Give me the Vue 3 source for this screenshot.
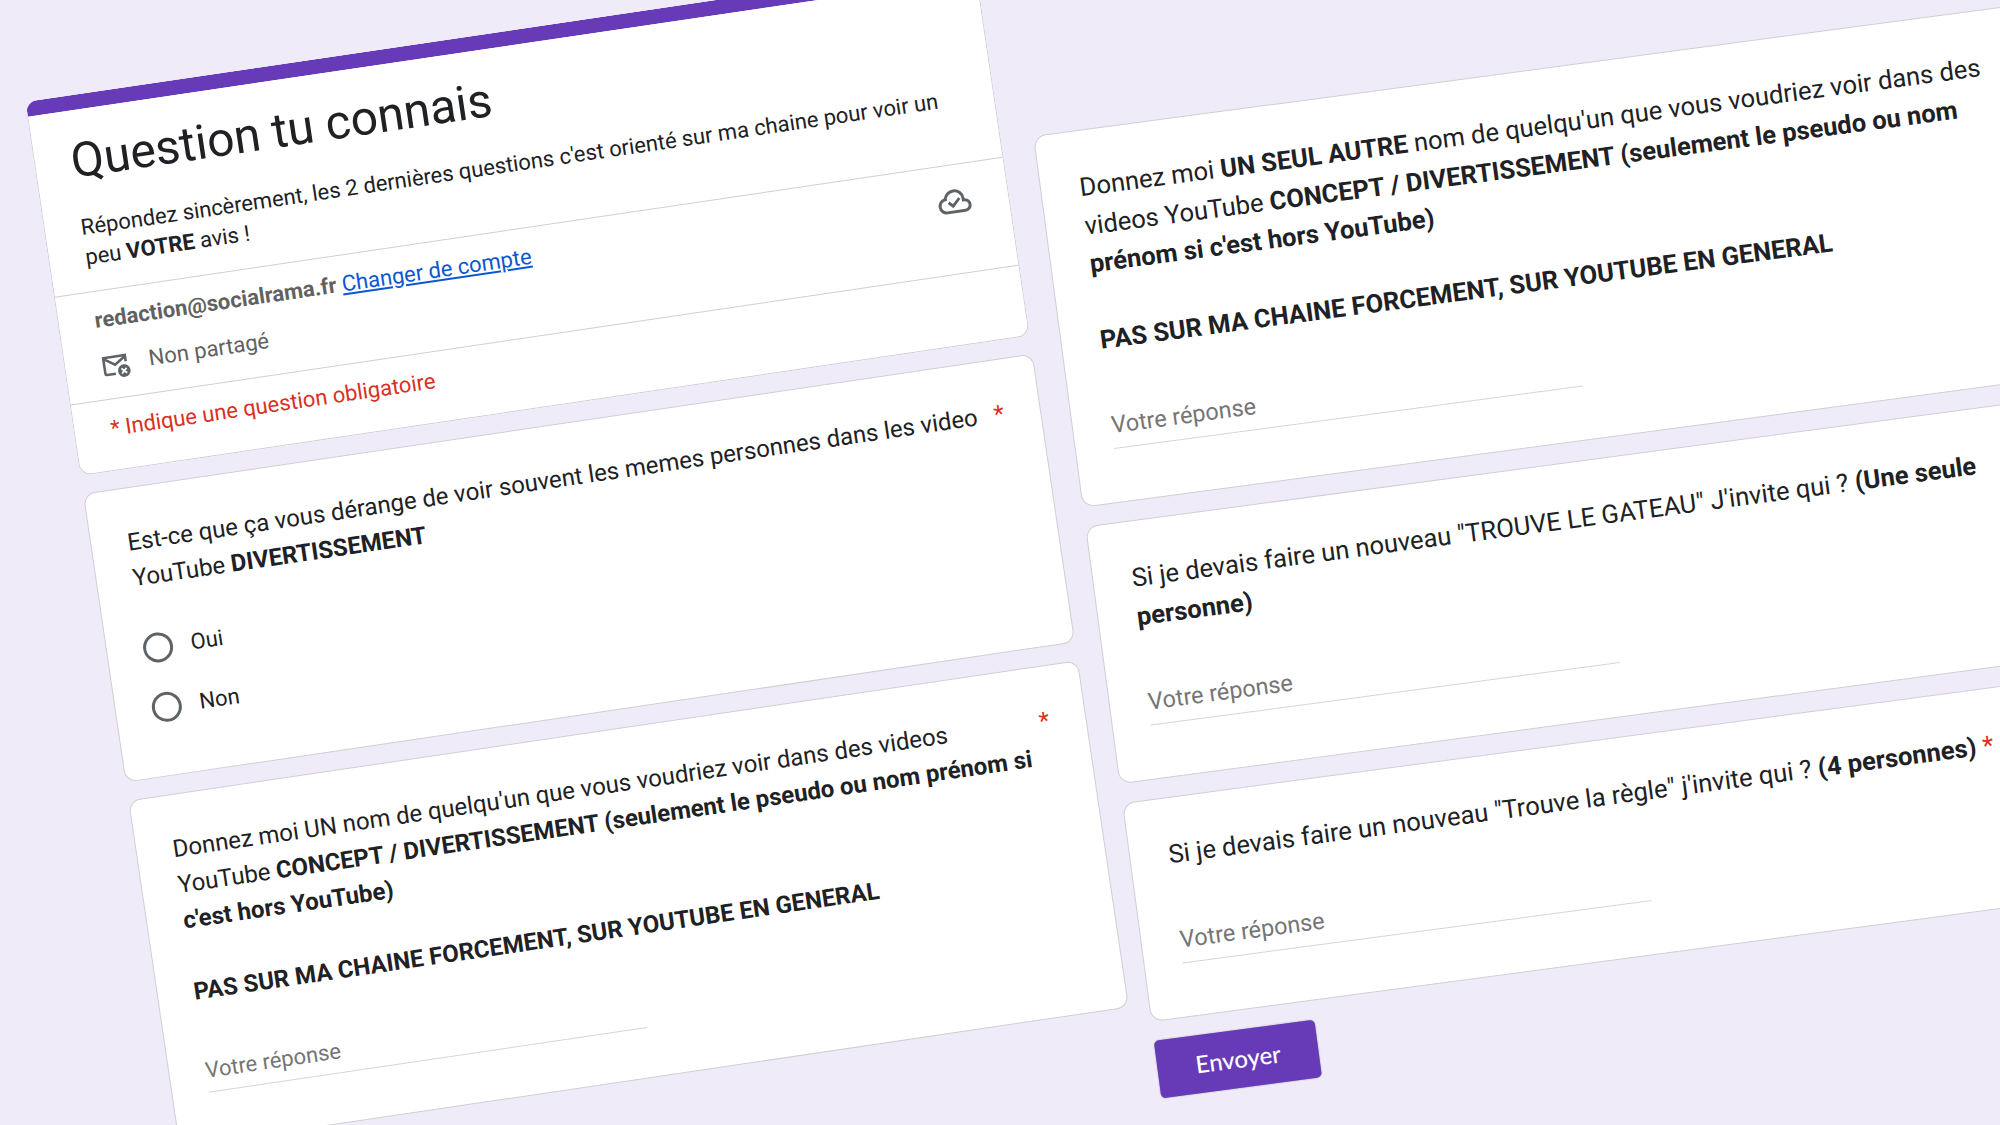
<script setup>
import { reactive } from 'vue'

const answers = reactive({})

const firstQuestions = [
  {
    id: 'derange',
    kind: 'choice',
    required: true,
    options: ['Oui', 'Non'],
    parts: [
      { text: 'Est-ce que ça vous dérange de voir souvent les memes personnes dans les video YouTube ' },
      { text: 'DIVERTISSEMENT', bold: true },
    ],
  },
  {
    id: 'un-nom',
    kind: 'text',
    required: true,
    parts: [
      { text: "Donnez moi UN nom de quelqu'un que vous voudriez voir dans des videos YouTube " },
      {
        text: "CONCEPT / DIVERTISSEMENT (seulement le pseudo ou nom prénom si c'est hors YouTube)\n\nPAS SUR MA CHAINE FORCEMENT, SUR YOUTUBE EN GENERAL",
        bold: true,
      },
    ],
  },
]

const lastQuestions = [
  {
    id: 'autre-nom',
    kind: 'text',
    parts: [
      { text: 'Donnez moi ' },
      { text: 'UN SEUL AUTRE', bold: true },
      { text: " nom de quelqu'un que vous voudriez voir dans des videos YouTube " },
      {
        text: "CONCEPT / DIVERTISSEMENT (seulement le pseudo ou nom prénom si c'est hors YouTube)\n\nPAS SUR MA CHAINE FORCEMENT, SUR YOUTUBE EN GENERAL",
        bold: true,
      },
    ],
  },
  {
    id: 'gateau',
    kind: 'text',
    parts: [
      { text: 'Si je devais faire un nouveau "TROUVE LE GATEAU" J\'invite qui ? ' },
      { text: '(Une seule personne)', bold: true },
    ],
  },
  {
    id: 'regle',
    kind: 'text',
    required: true,
    parts: [
      { text: 'Si je devais faire un nouveau "Trouve la règle" j\'invite qui ? ' },
      { text: '(4 personnes)', bold: true },
    ],
  },
]

const columns = [
  { name: 'first', questions: firstQuestions },
  { name: 'last', questions: lastQuestions },
]
</script>

<template>
  <main class="canvas">
    <div v-for="column in columns" :key="column.name" class="column" :class="`column-${column.name}`">
      <form class="sheet" @submit.prevent>
        <header v-if="column.name === 'first'" class="card intro">
          <div class="intro-text">
            <h1>Question tu connais</h1>
            <p>
              Répondez sincèrement, les 2 dernières questions c'est orienté sur ma chaine pour voir un
              peu <b>VOTRE</b> avis !
            </p>
          </div>
          <div class="account">
            <div>
              <div class="account-line">
                <b>redaction@socialrama.fr</b> <a href="#">Changer de compte</a>
              </div>
              <div class="sharing">
                <svg width="20" height="20" viewBox="0 0 20 20" fill="none" aria-hidden="true">
                  <path d="M8.8 16H3q-1.1 0-1.1-1.1V4.6h14.6v4.2" stroke="currentColor" stroke-width="1.7" />
                  <path d="M2.2 5.4l7 4.6 7-4.6" stroke="currentColor" stroke-width="1.7" />
                  <circle cx="14.7" cy="14.8" r="4.2" fill="currentColor" />
                  <path d="M13 13.1l3.4 3.4M16.4 13.1L13 16.5" stroke="#fff" stroke-width="1.2" />
                </svg>
                <span>Non partagé</span>
              </div>
            </div>
            <svg class="cloud" width="24" height="24" viewBox="0 0 24 24" fill="currentColor" aria-hidden="true">
              <path
                d="M6.5 20q-2.28 0-3.89-1.57T1 14.58q0-1.95 1.17-3.48T5.25 9.15q.63-2.3 2.5-3.72T12 4q2.93 0 4.96 2.04T19 11q1.73.2 2.86 1.49T23 15.5q0 1.88-1.31 3.19T18.5 20zm0-2h12q1.05 0 1.78-.72T21 15.5t-.72-1.78T18.5 13H17v-2q0-2.07-1.46-3.54T12 6 8.46 7.46 7 11h-.5q-1.45 0-2.47 1.03T3 14.5t1.03 2.47T6.5 18z"
              />
              <path d="M8 12.4l2.7 2.7 4.8-4.8" fill="none" stroke="currentColor" stroke-width="1.9" />
            </svg>
          </div>
          <p class="required-note">* Indique une question obligatoire</p>
        </header>

        <section v-for="question in column.questions" :key="question.id" class="card question">
          <div class="heading">
            <component
              :is="question.kind === 'text' ? 'label' : 'div'"
              :id="`${question.id}-title`"
              class="title"
              :for="question.kind === 'text' ? question.id : undefined"
            ><template v-for="(part, i) in question.parts" :key="i"><b v-if="part.bold">{{ part.text }}</b><template v-else>{{ part.text }}</template></template></component>
            <span v-if="question.required" class="star">*</span>
          </div>
          <div
            v-if="question.kind === 'choice'"
            class="options"
            role="radiogroup"
            :aria-labelledby="`${question.id}-title`"
          >
            <label v-for="option in question.options" :key="option" class="option">
              <input v-model="answers[question.id]" type="radio" :name="question.id" :value="option" />
              <span>{{ option }}</span>
            </label>
          </div>
          <input
            v-else
            :id="question.id"
            v-model="answers[question.id]"
            class="answer"
            type="text"
            placeholder="Votre réponse"
          />
        </section>

        <button v-if="column.name === 'last'" class="submit" type="submit">Envoyer</button>
      </form>
    </div>
  </main>
</template>

<style>
body {
  margin: 0;
  background: #f0ebf8;
}
</style>

<style scoped>
.canvas {
  box-sizing: border-box;
  display: flex;
  align-items: flex-start;
  height: 100vh;
  padding: 102px 0 0 25px;
  overflow: hidden;
  background: #f0ebf8;
  color: #202124;
  font-family: Roboto, Arial, sans-serif;
  text-rendering: geometricPrecision;
}

.column {
  flex: none;
  transform-origin: 0 0;
}

.column-first {
  width: 48vw;
  transform: rotate(-8.4deg);
}

.column-last {
  width: 51.2vw;
  margin: 34px 0 0 48px;
  transform: rotate(-7.6deg);
}

.sheet {
  display: flex;
  flex-direction: column;
  gap: 12px;
}

.column-first .sheet {
  zoom: 1.5;
}

.column-last .sheet {
  zoom: 1.6;
}

.card {
  box-sizing: border-box;
  border: 1px solid #ced0d4;
  border-radius: 8px;
  background: #fff;
}

.intro {
  border-top: 10px solid #673ab7;
  font-size: 11pt;
  line-height: 16px;
}

.intro-text {
  padding: 12px 24px;
  border-bottom: 1px solid #ced0d4;
}

h1 {
  margin: 0 0 13px;
  font-size: 32px;
  font-weight: 400;
  line-height: 44px;
}

.intro-text p {
  margin: 0;
  line-height: 20px;
}

.account {
  display: flex;
  justify-content: space-between;
  padding: 12px 24px;
  border-bottom: 1px solid #ced0d4;
  color: #616161;
}

.account svg {
  color: #5f6368;
}

.account a {
  color: #0b57d0;
}

.sharing {
  display: flex;
  align-items: center;
  gap: 12px;
  height: 20px;
  margin-top: 12px;
}

.required-note {
  margin: 0;
  padding: 12px 24px 19px;
  color: #d93025;
}

.question {
  padding: 24px 24px 25px;
}

.heading {
  display: flex;
  font-size: 16px;
  line-height: 24px;
}

.title {
  white-space: pre-line;
}

.star {
  padding-left: 4px;
  color: #d93025;
}

.options {
  margin-top: 16px;
}

.option {
  display: flex;
  align-items: center;
  gap: 12px;
  height: 40px;
  font-size: 11pt;
}

.option input {
  box-sizing: border-box;
  width: 20px;
  height: 20px;
  margin: 0;
  border: 2px solid #5f6368;
  border-radius: 50%;
  appearance: none;
}

.option input:checked {
  border: 6px solid #673ab7;
}

.answer {
  box-sizing: border-box;
  display: block;
  width: 50%;
  height: 27px;
  margin: 29px 0 8px;
  padding: 0 0 2px;
  border: 0;
  border-bottom: 1px solid #d4d6da;
  outline: 0;
  background: none;
  color: #202124;
  font: 11pt/24px Roboto, Arial, sans-serif;
}

.answer::placeholder {
  color: #757575;
  opacity: 1;
}

.submit {
  align-self: flex-start;
  height: 36px;
  padding: 0 24px;
  border: 0;
  border-radius: 3px;
  background: #673ab7;
  box-shadow: 0 0 1px #0006;
  color: #fff;
  font: 500 15px/36px Lato, Roboto, sans-serif;
}
</style>
